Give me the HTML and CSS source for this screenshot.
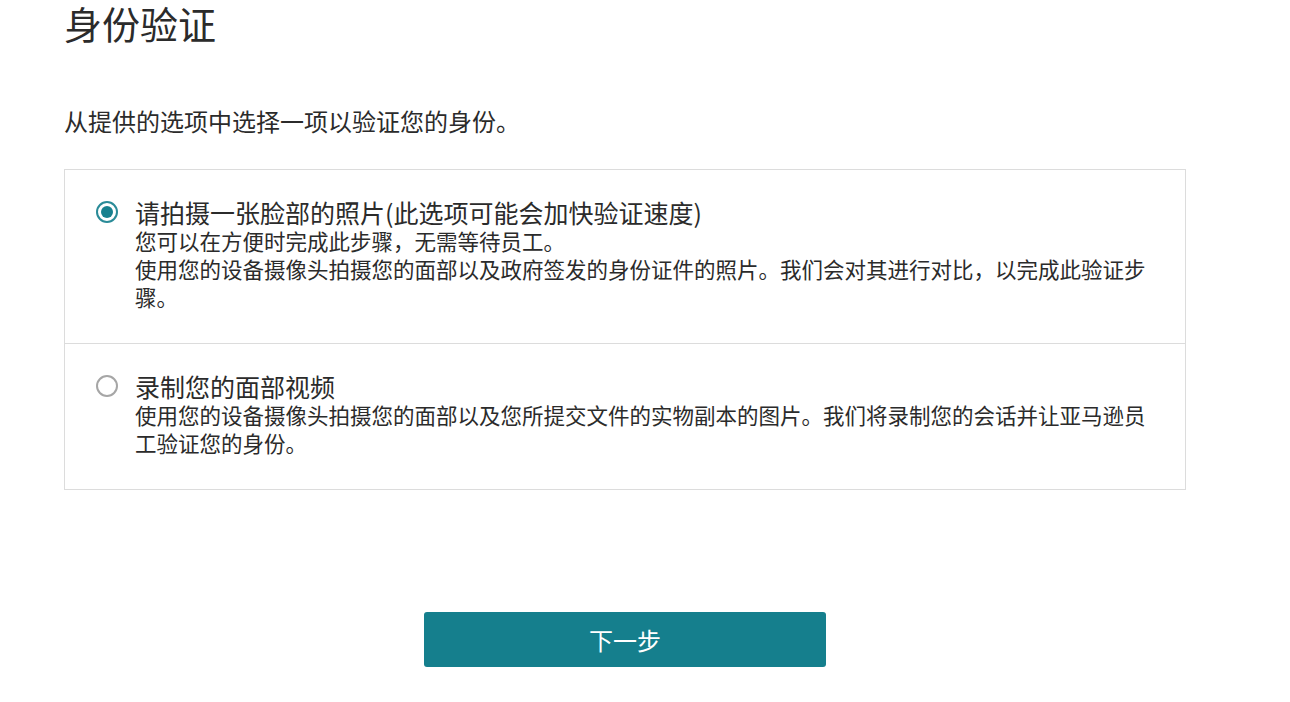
FILE: index.html
```html
<!DOCTYPE html>
<html lang="zh-CN">
<head>
<meta charset="utf-8">
<title>身份验证</title>
<link rel="stylesheet" href="styles.css">
</head>
<body>
<main class="page">
  <h1 class="title">身份验证</h1>
  <p class="intro">从提供的选项中选择一项以验证您的身份。</p>
  <div class="options">
    <label class="option">
      <span class="radio radio-checked"><span class="dot"></span></span>
      <span class="option-text">
        <span class="option-title">请拍摄一张脸部的照片(此选项可能会加快验证速度)</span>
        <span class="option-desc">您可以在方便时完成此步骤，无需等待员工。</span>
        <span class="option-desc">使用您的设备摄像头拍摄您的面部以及政府签发的身份证件的照片。我们会对其进行对比，以完成此验证步骤。</span>
      </span>
    </label>
    <label class="option">
      <span class="radio"></span>
      <span class="option-text">
        <span class="option-title">录制您的面部视频</span>
        <span class="option-desc">使用您的设备摄像头拍摄您的面部以及您所提交文件的实物副本的图片。我们将录制您的会话并让亚马逊员工验证您的身份。</span>
      </span>
    </label>
  </div>
  <div class="actions">
    <button class="next" type="button">下一步</button>
  </div>
</main>
</body>
</html>
```
FILE: styles.css
```css
html, body {
  margin: 0;
  padding: 0;
  background: #ffffff;
}
body {
  font-family: "Noto Sans CJK SC", "Noto Sans", "Liberation Sans", sans-serif;
  color: #2b2b2b;
}
.page {
  width: 1122px;
  padding-left: 64px;
}
.title {
  margin: 0;
  font-size: 38px;
  font-weight: 400;
  line-height: 45px;
  color: #2b2b2b;
}
.intro {
  margin: 61px 0 0;
  font-size: 24px;
  line-height: 30px;
  color: #2b2b2b;
}
.options {
  margin-top: 33px;
  border: 1px solid #dcdcdc;
}
.option {
  display: flex;
  align-items: flex-start;
  gap: 17px;
  padding: 27px 30px 32px 31px;
}
.option + .option {
  border-top: 1px solid #dcdcdc;
}
.radio {
  flex: none;
  box-sizing: border-box;
  width: 22px;
  height: 22px;
  margin-top: 4px;
  border: 2px solid #a6a6a6;
  border-radius: 50%;
  display: flex;
  align-items: center;
  justify-content: center;
}
.radio-checked {
  border-color: #2a8b98;
}
.dot {
  width: 12px;
  height: 12px;
  border-radius: 50%;
  background: #17808e;
}
.option-text {
  display: flex;
  flex-direction: column;
  flex: 1;
}
.option-title {
  font-size: 25px;
  line-height: 30px;
  color: #2b2b2b;
}
.option-desc {
  font-size: 21.5px;
  line-height: 28px;
  color: #2b2b2b;
}
.actions {
  display: flex;
  justify-content: center;
  margin-top: 122px;
}
.next {
  width: 402px;
  height: 55px;
  border: none;
  border-radius: 3px;
  background: #157f8d;
  color: #ffffff;
  font-family: "Noto Sans CJK SC", "Noto Sans", sans-serif;
  font-size: 24px;
  cursor: pointer;
}
```
